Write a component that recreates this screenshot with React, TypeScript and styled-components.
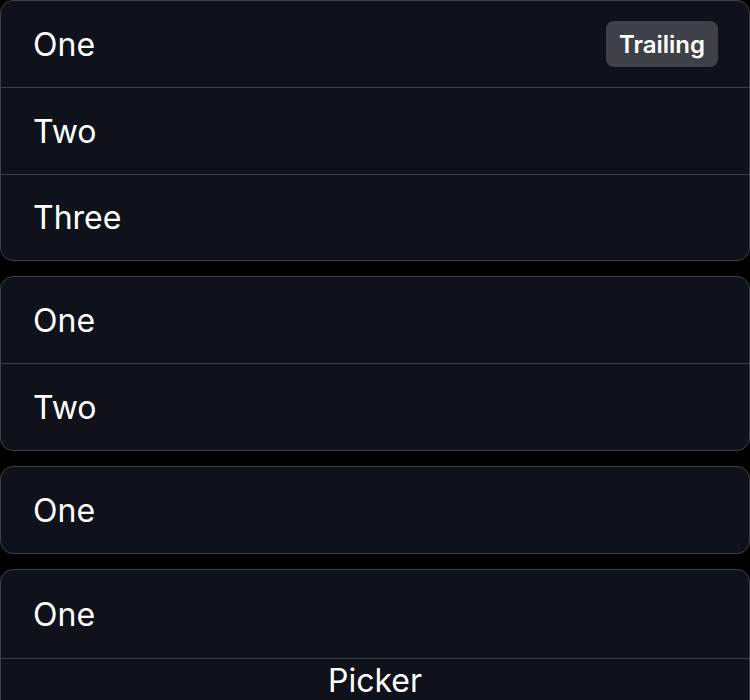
import React from "react";
import styled, { createGlobalStyle } from "styled-components";

const Global = createGlobalStyle`
  html, body { margin: 0; padding: 0; background: #000; }
  body { font-family: Inter, "Noto Sans", sans-serif; color: #fff; }
`;

const Page = styled.div`
  display: flex;
  flex-direction: column;
  gap: 15px;
  width: 750px;
`;

const Card = styled.div`
  background: #0f121a;
  border: 1px solid #3d4048;
  border-radius: 13px;
  display: flex;
  flex-direction: column;
  overflow: hidden;
`;

const Row = styled.div<{ $h?: number }>`
  height: ${(p) => p.$h ?? 86}px;
  flex-shrink: 0;
  display: flex;
  align-items: center;
  justify-content: space-between;
  padding: 0 31px 0 32px;
  font-size: 32px;
  & + & { border-top: 1px solid #3d4048; }
`;

const PickerRow = styled.div`
  border-top: 1px solid #3d4048;
  text-align: center;
  font-size: 32px;
  line-height: 40px;
  padding: 2px 0 40px;
`;

const Badge = styled.span`
  background: #3f4149;
  border-radius: 8px;
  height: 46px;
  padding: 0 13px;
  display: flex;
  align-items: center;
  font-size: 24px;
  font-weight: 600;
`;

export default function App() {
  return (
    <>
      <Global />
      <Page>
        <Card>
          <Row>
            <span>One</span>
            <Badge>Trailing</Badge>
          </Row>
          <Row><span>Two</span></Row>
          <Row $h={85}><span>Three</span></Row>
        </Card>
        <Card>
          <Row><span>One</span></Row>
          <Row><span>Two</span></Row>
        </Card>
        <Card>
          <Row><span>One</span></Row>
        </Card>
        <Card>
          <Row $h={88}><span>One</span></Row>
          <PickerRow>Picker</PickerRow>
        </Card>
      </Page>
    </>
  );
}
